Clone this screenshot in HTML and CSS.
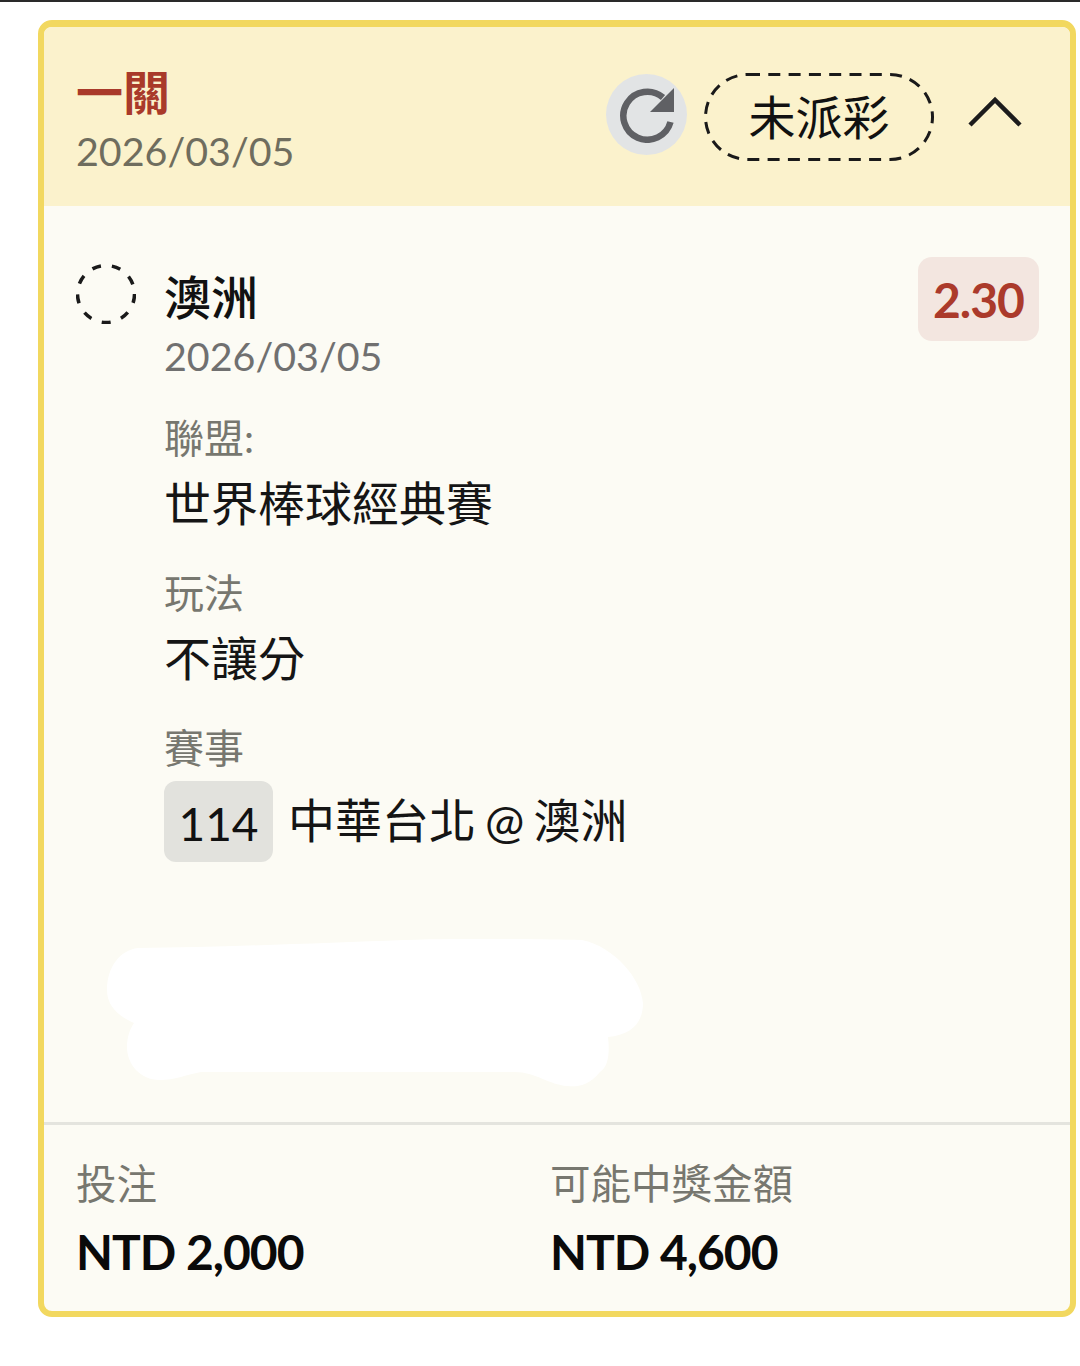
FILE: index.html
```html
<!DOCTYPE html>
<html lang="zh-Hant">
<head>
<meta charset="utf-8">
<title>投注</title>
<link rel="stylesheet" href="styles.css">
</head>
<body>
<main class="card">
  <header class="head">
    <div class="head-text">
      <div class="title">一關</div>
      <div class="date">2026/03/05</div>
    </div>
    <div class="head-actions">
      <button class="refresh" type="button" aria-label="refresh">
        <svg width="56" height="56" viewBox="0 0 56 56"><path d="M51.500 35A24 24 0 1 1 44 10.500" fill="none" stroke="#5f6064" stroke-width="6.500"/><path d="M55 1V25H31Z" fill="#5f6064"/></svg>
      </button>
      <div class="status">
        <svg class="status-ring" width="230" height="88" viewBox="0 0 230 88"><rect x="1.500" y="1.500" width="227" height="85" rx="42.500" fill="none" stroke="#1a1a1a" stroke-width="3" stroke-dasharray="12 8.300"/></svg>
        未派彩
      </div>
      <svg class="chevron" width="54" height="32" viewBox="0 0 54 32"><path d="M2 29L27 4L52 29" fill="none" stroke="#1c1c1c" stroke-width="4.500"/></svg>
    </div>
  </header>
  <section class="body">
    <svg class="radio" width="60" height="60" viewBox="0 0 60 60"><circle cx="30" cy="30" r="28.500" fill="none" stroke="#1a1a1a" stroke-width="3.500" stroke-dasharray="9 11"/></svg>
    <div class="details">
      <div class="team">澳洲</div>
      <div class="date">2026/03/05</div>
      <div class="label label-first">聯盟:</div>
      <div class="value">世界棒球經典賽</div>
      <div class="label">玩法</div>
      <div class="value">不讓分</div>
      <div class="label">賽事</div>
      <div class="match"><span class="code">114</span><span class="value">中華台北 @ 澳洲</span></div>
    </div>
    <div class="odds">2.30</div>
    <svg class="scribble" width="540" height="150" viewBox="0 0 540 150"><path d="M33 9C120 8 220 4 299 1C360 -1 430 0 477 1C510 8 536 40 538 64C538 85 525 96 503 98C505 115 503 128 495 133C483 148 470 148 462 147C445 146 430 133 410 133H96C80 136 70 141 55 141C35 141 22 125 22 108C22 98 25 90 29 84C15 78 2 68 2 51C2 28 15 11 33 9Z" fill="#fff"/></svg>
  </section>
  <footer class="foot">
    <div class="stat stat-bet">
      <div class="foot-label">投注</div>
      <div class="amount">NTD 2,000</div>
    </div>
    <div class="stat">
      <div class="foot-label">可能中獎金額</div>
      <div class="amount">NTD 4,600</div>
    </div>
  </footer>
</main>
</body>
</html>
```
FILE: styles.css
```css
* { box-sizing: border-box; }
html, body { margin: 0; padding: 0; }
body {
  width: 1080px;
  height: 1366px;
  background: #fff;
  border-top: 2px solid #2a2a2a;
  padding: 18px 4px 0 38px;
  font-family: Lato, "Noto Sans CJK TC", sans-serif;
  color: #111;
}
.card {
  height: 1297px;
  border: 6px solid #f2d85f;
  border-top-width: 7px;
  border-radius: 14px;
  background: #fcfbf4;
  display: flex;
  flex-direction: column;
  overflow: hidden;
}
.head {
  height: 179px;
  flex: none;
  background: #fbf2cc;
  display: flex;
  justify-content: space-between;
  padding: 36px 48px 0 32px;
}
.title {
  font-size: 47px;
  line-height: 58px;
  font-weight: 700;
  color: #a93a2a;
}
.date {
  font-size: 39.400px;
  line-height: 56px;
  color: #6f6d5e;
}
.head-text .date { margin-top: 2px; }
.head-actions {
  display: flex;
  align-items: flex-start;
}
.refresh {
  width: 81px;
  height: 81px;
  margin-top: 11px;
  border: 0;
  padding: 0;
  border-radius: 50%;
  background: #e2e4e5;
  display: flex;
  align-items: center;
  justify-content: center;
}
.status {
  position: relative;
  width: 230px;
  height: 88px;
  margin: 10px 0 0 17px;
  font-size: 47px;
  line-height: 88px;
  text-align: center;
}
.status-ring {
  position: absolute;
  left: 0;
  top: 0;
}
.chevron { margin: 33px 0 0 34px; }
.body {
  position: relative;
  flex: 1;
  display: flex;
  align-items: flex-start;
  padding: 51px 31px 0 32px;
}
.radio {
  margin-top: 7px;
  flex: none;
}
.details {
  flex: 1;
  margin-left: 28px;
}
.team {
  font-size: 47px;
  line-height: 64px;
  font-weight: 500;
  margin-top: 8px;
}
.details .date { color: #707070; margin-top: 1px; line-height: 52px; }
.label {
  font-size: 40px;
  line-height: 52px;
  color: #77776f;
  margin-top: 32px;
}
.label-first { margin-top: 30px; }
.value {
  font-size: 47px;
  line-height: 64px;
  margin-top: 7px;
  color: #151515;
}
.match {
  display: flex;
  align-items: center;
  gap: 15px;
  margin-top: 7px;
}
.match .value { margin-top: -3px; word-spacing: -3px; }
.code {
  width: 109px;
  height: 81px;
  border-radius: 12px;
  background: #e2e2dd;
  font-size: 46px;
  line-height: 85px;
  text-align: center;
}
.odds {
  width: 121px;
  height: 84px;
  flex: none;
  border-radius: 14px;
  background: #f3e6e0;
  color: #ab3a2b;
  font-size: 48px;
  font-weight: 700;
  line-height: 86px;
  text-align: center;
  letter-spacing: -1px;
}
.scribble {
  position: absolute;
  left: 61px;
  top: 733px;
}
.foot {
  height: 189px;
  flex: none;
  border-top: 3px solid #e4e4de;
  display: flex;
  padding: 31px 32px 0;
}
.stat-bet { width: 474px; }
.foot-label {
  font-size: 40.500px;
  line-height: 56px;
  color: #77776f;
}
.amount {
  font-size: 48px;
  line-height: 60px;
  margin-top: 10px;
  font-weight: 700;
  color: #0a0a0a;
  letter-spacing: -1px;
}
```
